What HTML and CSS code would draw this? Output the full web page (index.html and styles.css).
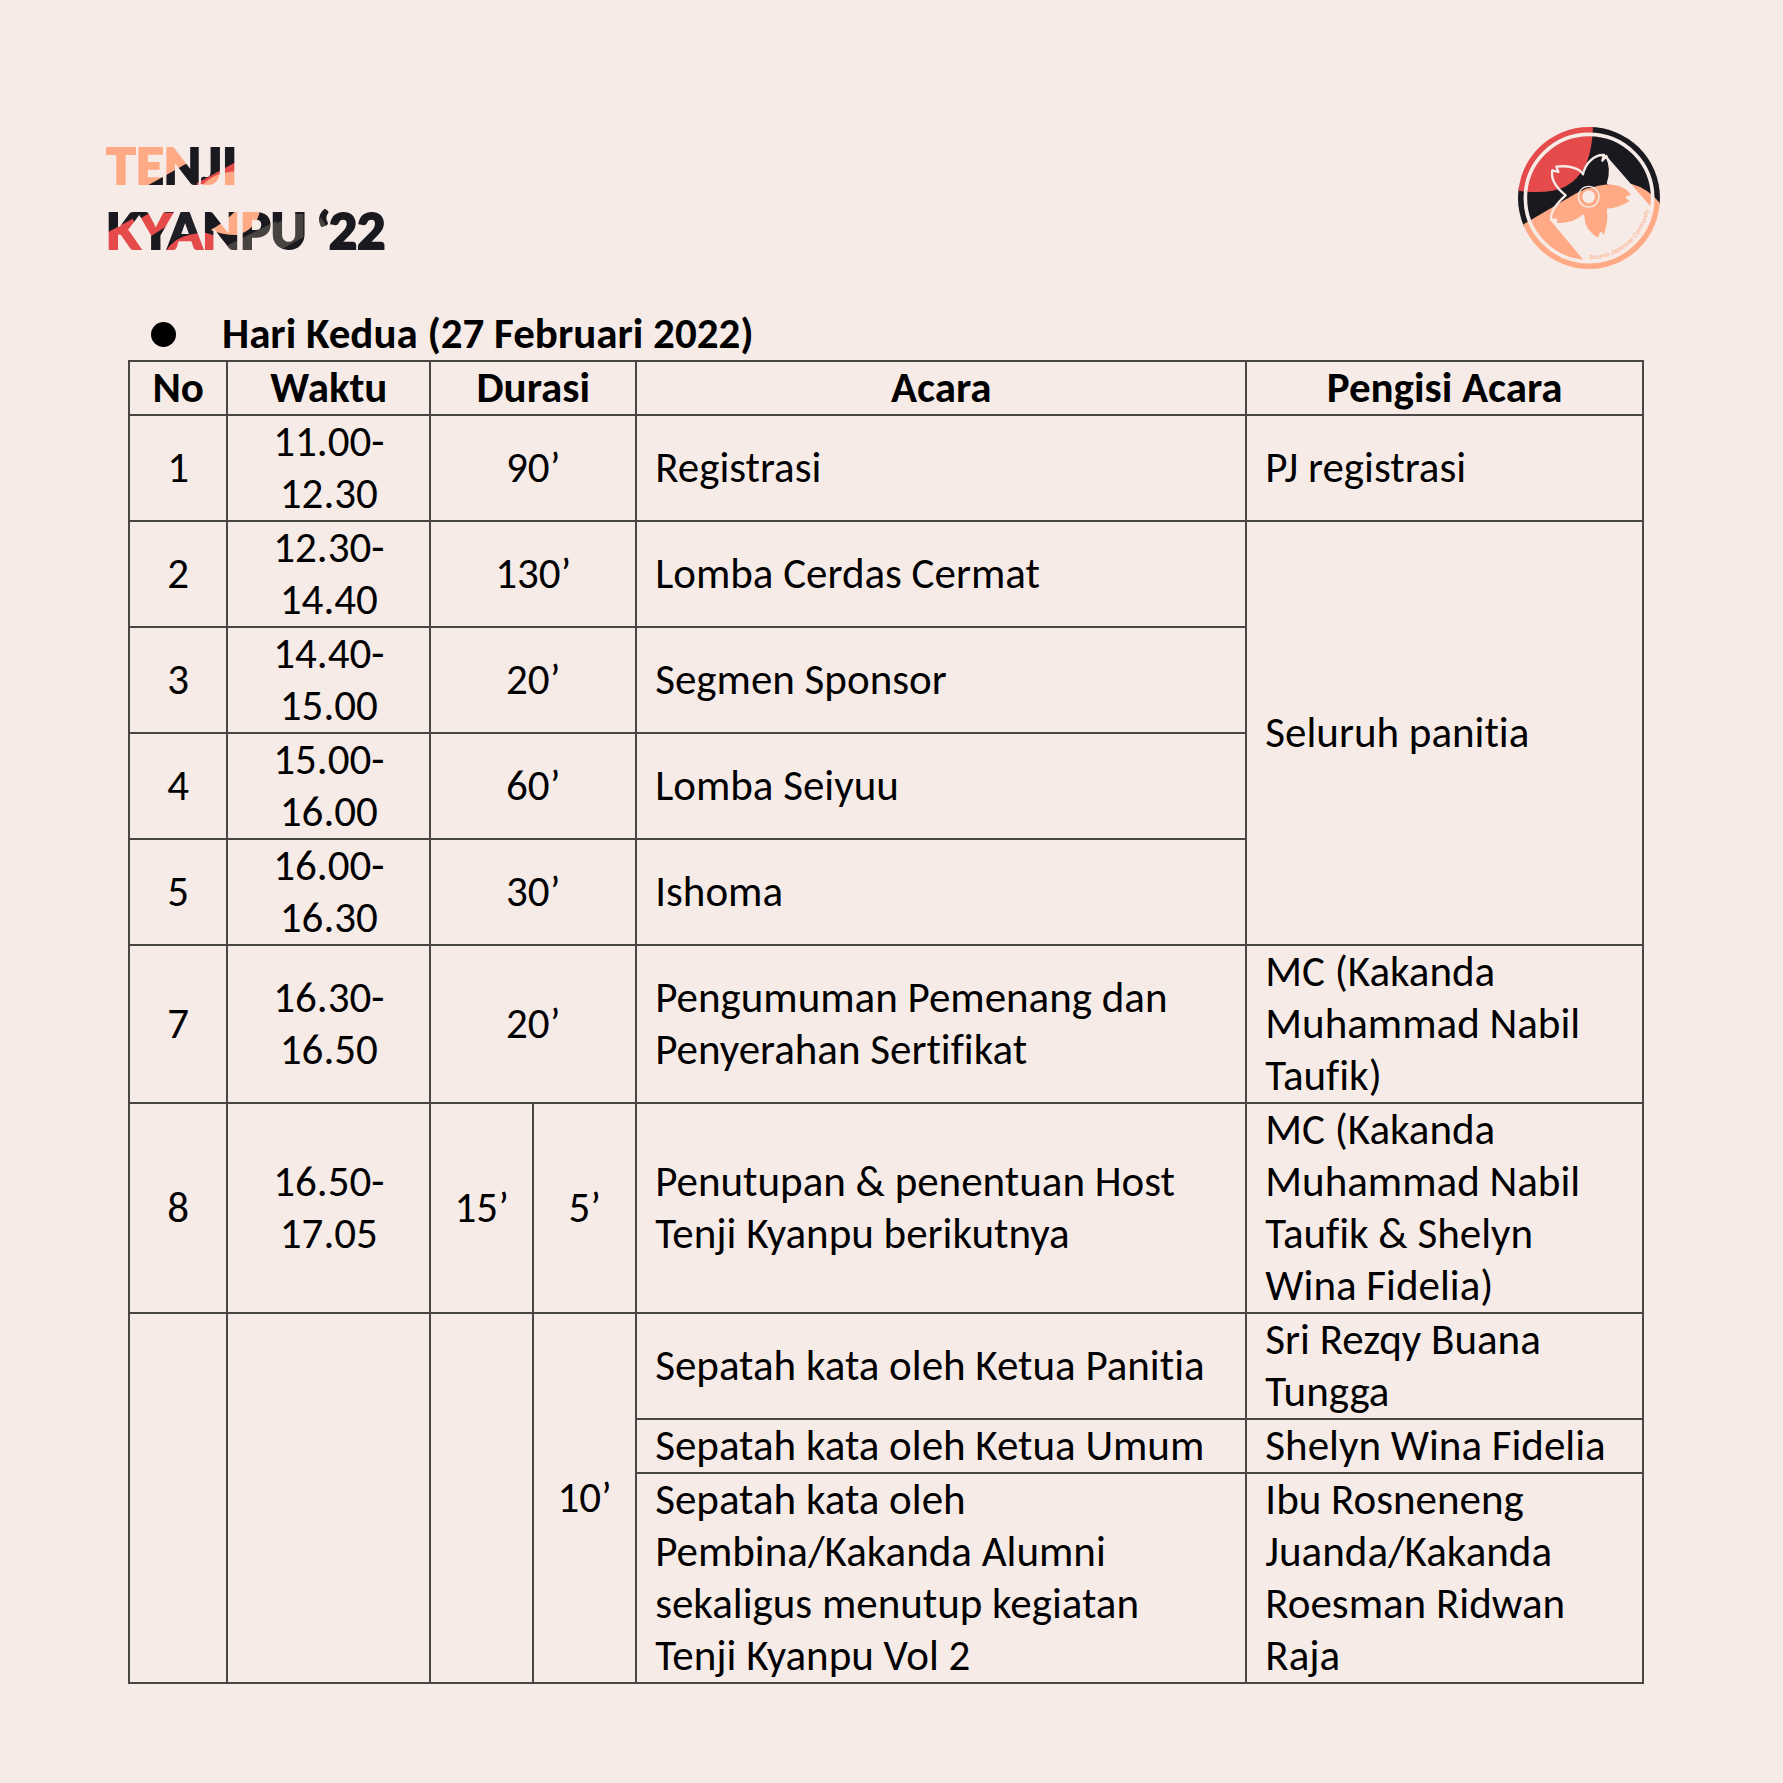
FILE: index.html
```
<!DOCTYPE html>
<html lang="id">
<head>
<meta charset="utf-8">
<meta name="viewport" content="width=device-width, initial-scale=1">
<title>Tenji Kyanpu '22</title>
<link rel="stylesheet" href="styles.css">
</head>
<body>
<header class="masthead">
  <svg class="wordmark" viewBox="0 0 930 420" role="img" aria-label="Tenji Kyanpu '22">
    <defs>
      <pattern id="camo" patternUnits="userSpaceOnUse" width="930" height="420">
        <rect width="930" height="210" fill="#ffa985"/>
        <path fill="#1a191f" d="M170 168L298 96L280 40H460V168Z"/>
        <path fill="#e64b4c" d="M460 84L320 160V200H460Z"/>
        <path fill="#ffa985" d="M325 180C350 145 390 120 460 125V200H325Z"/>
        <rect y="210" width="930" height="210" fill="#1a191f"/>
        <path fill="#e64b4c" d="M40 314L128 266L180 380H40Z"/>
        <path fill="#e64b4c" d="M150 266L180 248H262L246 278L180 320Z"/>
        <path fill="#1f1f27" d="M246 278L270 240H330V310Q280 310 246 335Z"/>
        <path fill="#e64b4c" d="M225 370Q250 312 345 308Q410 320 425 375Z"/>
        <path fill="#474340" d="M405 350L560 272V380H425Z"/>
        <path fill="#ffa985" d="M362 300Q400 280 440 240H510Q500 300 440 315Q395 315 362 300Z"/>
        <path fill="#474340" d="M540 292L610 252H640V322L560 366H540Z"/>
        <path fill="#474340" d="M672 304L692 262L710 288Z"/>
      </pattern>
    </defs>
    <g class="wordmark-text" fill="url(#camo)" stroke="url(#camo)" stroke-width="6">
      <text x="49" y="161">TENJI</text>
      <text x="48" y="358">KYANPU ‘22</text>
    </g>
  </svg>
  <svg class="emblem" viewBox="36 33 432 432" role="img" aria-label="Smunel Japanese Community">
    <defs>
      <clipPath id="disc"><circle cx="252" cy="249" r="213"/></clipPath>
      <clipPath id="inner"><circle cx="252" cy="249" r="190"/></clipPath>
      <path id="flower" d="M234 178C240 145 268 118 297 120L292 137L304 123C318 150 317 180 309 204C345 206 370 218 383 241L366 247L380 259C355 274 330 284 309 284C314 312 307 342 297 368L288 354L281 373C250 356 234 330 235 302C210 324 180 330 150 326L154 314L138 315C136 290 158 262 182 241C158 222 136 195 142 166L160 171L154 155C190 150 225 160 234 178Z"/>
      <clipPath id="petals"><use href="#flower"/></clipPath>
      <g id="ground">
        <path fill="#1a191f" d="M250 30H480V276L380 215L215 244L30 352V216L180 205Q230 170 250 30Z"/>
        <path fill="#e64b4c" d="M30 226Q130 240 180 215C235 185 262 130 264 30H30Z"/>
        <path fill="#ffa985" d="M30 343L215 234Q290 200 380 207Q430 220 470 270V470H30Z"/>
      </g>
      <path id="rim" d="M252 433A184 184 0 0 0 436 249"/>
    </defs>
    <g clip-path="url(#disc)"><use href="#ground"/></g>
    <g clip-path="url(#inner)"><path fill="#f6ebe7" d="M304 122L450 290V450H248L140 320L250 245Z"/></g>
    <circle cx="252" cy="249" r="191" fill="none" stroke="#f6ebe7" stroke-width="11"/>
    <g clip-path="url(#petals)"><use href="#ground"/></g>
    <use href="#flower" fill="none" stroke="#f6ebe7" stroke-width="7" stroke-linejoin="round"/>
    <circle cx="251" cy="245" r="25" fill="#ffa985"/>
    <circle cx="251" cy="245" r="31" fill="none" stroke="#f6ebe7" stroke-width="4"/>
    <circle cx="251" cy="245" r="19" fill="#f6ebe7"/>
    <text class="emblem-text"><textPath href="#rim">Smunel Japanese Community</textPath></text>
  </svg>
</header>
<main class="schedule">
  <ul class="day-list"><li class="day"><h1 class="day-title">Hari Kedua (27 Februari 2022)</h1></li></ul>
  <table class="rundown">
    <colgroup><col class="col-no"><col class="col-time"><col class="col-part"><col class="col-part"><col class="col-event"><col class="col-host"></colgroup>
    <thead>
      <tr><th>No</th><th>Waktu</th><th colspan="2">Durasi</th><th>Acara</th><th>Pengisi Acara</th></tr>
    </thead>
    <tbody>
      <tr><td>1</td><td>11.00-<br>12.30</td><td colspan="2">90’</td><td class="text">Registrasi</td><td class="text">PJ registrasi</td></tr>
      <tr><td>2</td><td>12.30-<br>14.40</td><td colspan="2">130’</td><td class="text">Lomba Cerdas Cermat</td><td class="text" rowspan="4">Seluruh panitia</td></tr>
      <tr><td>3</td><td>14.40-<br>15.00</td><td colspan="2">20’</td><td class="text">Segmen Sponsor</td></tr>
      <tr><td>4</td><td>15.00-<br>16.00</td><td colspan="2">60’</td><td class="text">Lomba Seiyuu</td></tr>
      <tr><td>5</td><td>16.00-<br>16.30</td><td colspan="2">30’</td><td class="text">Ishoma</td></tr>
      <tr><td>7</td><td>16.30-<br>16.50</td><td colspan="2">20’</td><td class="text">Pengumuman Pemenang dan<br>Penyerahan Sertifikat</td><td class="text">MC (Kakanda<br>Muhammad Nabil<br>Taufik)</td></tr>
      <tr><td>8</td><td>16.50-<br>17.05</td><td>15’</td><td>5’</td><td class="text">Penutupan &amp; penentuan Host<br>Tenji Kyanpu berikutnya</td><td class="text">MC (Kakanda<br>Muhammad Nabil<br>Taufik &amp; Shelyn<br>Wina Fidelia)</td></tr>
    </tbody>
    <tbody class="closing">
      <tr><td rowspan="3"></td><td rowspan="3"></td><td rowspan="3"></td><td rowspan="3">10’</td><td class="text">Sepatah kata oleh Ketua Panitia</td><td class="text">Sri Rezqy Buana<br>Tungga</td></tr>
      <tr><td class="text">Sepatah kata oleh Ketua Umum</td><td class="text">Shelyn Wina Fidelia</td></tr>
      <tr><td class="text">Sepatah kata oleh<br>Pembina/Kakanda Alumni<br>sekaligus menutup kegiatan<br>Tenji Kyanpu Vol 2</td><td class="text">Ibu Rosneneng<br>Juanda/Kakanda<br>Roesman Ridwan<br>Raja</td></tr>
    </tbody>
  </table>
</main>
</body>
</html>
```
FILE: styles.css
```
body {
  margin: 0;
  background: #f6ebe7;
  color: #000;
  font-family: Carlito, Lato, sans-serif;
  font-size: 43px;
  line-height: 52px;
  font-variant-ligatures: none;
}

.masthead {
  display: flex;
  justify-content: space-between;
  align-items: flex-start;
  padding: 126px 122px 0 90px;
}

.wordmark {
  width: 310px;
  height: 140px;
  margin-top: 4px;
}

.wordmark-text {
  font-family: Lato, sans-serif;
  font-weight: 900;
  font-size: 146px;
}

.emblem {
  width: 144px;
  height: 144px;
}

.emblem-text {
  font-family: Inter, sans-serif;
  font-size: 18px;
  fill: #ffa985;
}

.schedule {
  padding: 38px 139px 100px 128px;
}

.day-list {
  margin: 0;
  padding: 0 0 0 23px;
  list-style: none;
}

.day {
  display: flex;
  align-items: center;
  gap: 46px;
}

.day::before {
  content: "";
  width: 25px;
  height: 25px;
  border-radius: 50%;
  background: #000;
}

.day-title {
  margin: 0;
  font-size: 43px;
  font-weight: 700;
}

.rundown {
  width: 100%;
  table-layout: fixed;
  border-collapse: collapse;
}

.col-no { width: 6.5%; }
.col-time { width: 13.4%; }
.col-part { width: 6.8%; }
.col-event { width: 40.3%; }
.col-host { width: 26.2%; }

.rundown th,
.rundown td {
  padding: 0;
  border: 2px solid #4a4645;
  text-align: center;
  vertical-align: middle;
  white-space: nowrap;
}

.rundown .text {
  padding-left: 18px;
  text-align: left;
}

.rundown .closing tr:first-child td {
  border-top-color: #1a1a1a;
}
```
